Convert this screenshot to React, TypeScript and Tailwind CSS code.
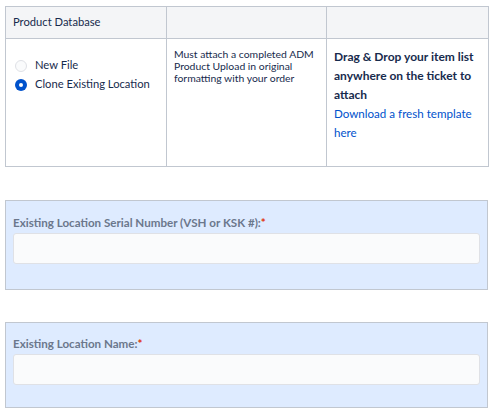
import React from 'react';

const font = { fontFamily: 'Lato, "Liberation Sans", Arial, sans-serif' };

function Radio({ checked, label }: { checked: boolean; label: string }) {
  return (
    <label className="flex items-center h-[19px] text-[11.2px] text-[#172b4d] whitespace-nowrap">
      {checked ? (
        <span className="shrink-0 w-[12px] h-[12px] rounded-full bg-[#0052cc] flex items-center justify-center">
          <span className="w-[4px] h-[4px] rounded-full bg-white" />
        </span>
      ) : (
        <span className="shrink-0 w-[12px] h-[12px] rounded-full border border-[#dfe1e6] bg-[#fafbfc]" />
      )}
      <span className="ml-[8px]">{label}</span>
    </label>
  );
}

function FieldBox({ label, className }: { label: string; className: string }) {
  return (
    <div className={`bg-[#deebff] border border-[#c1c7d0] px-[7px] ${className}`}>
      <div className="text-[11.6px] leading-[16px] font-bold text-[#6b778c]">
        {label}
        <span className="text-[#de350b]">*</span>
      </div>
      <div className="mt-[2px] h-[31px] bg-[#fafbfc] border border-[#dfe1e6] rounded-[3px]" />
    </div>
  );
}

export default function App() {
  return (
    <div className="bg-white min-h-[418px] pl-[5px] pt-[6px] w-[488px]" style={font}>
      {/* product database table */}
      <table className="w-[483px] border-collapse table-fixed">
        <colgroup>
          <col className="w-[161px]" />
          <col className="w-[160px]" />
          <col className="w-[162px]" />
        </colgroup>
        <thead>
          <tr className="h-[32px] bg-[#f4f5f7]">
            <th className="border border-[#c1c7d0] px-[7px] text-left font-normal text-[11.2px] text-[#172b4d]">
              Product Database
            </th>
            <th className="border border-[#c1c7d0]" />
            <th className="border border-[#c1c7d0]" />
          </tr>
        </thead>
        <tbody>
          <tr className="h-[128px] align-top">
            <td className="border border-[#c1c7d0] px-[9px] pt-[17px]">
              <Radio checked={false} label="New File" />
              <Radio checked label="Clone Existing Location" />
            </td>
            <td className="border border-[#c1c7d0] px-[7px] pt-[9px] text-[10.4px] leading-[12px] text-[#172b4d]">
              Must attach a completed ADM Product Upload in original formatting with your order
            </td>
            <td className="border border-[#c1c7d0] px-[7px] pt-[8px] text-[12px] leading-[19px]">
              <div className="font-bold text-[#172b4d]">
                Drag &amp; Drop your item list anywhere on the ticket to attach
              </div>
              <a className="text-[11.6px] text-[#0052cc]">Download a fresh template here</a>
            </td>
          </tr>
        </tbody>
      </table>

      <div className="w-[483px]">
        <FieldBox
          label="Existing Location Serial Number (VSH or KSK #):"
          className="mt-[33px] pt-[14px] pb-[25px]"
        />
        <FieldBox label="Existing Location Name:" className="mt-[32px] pt-[13px] pb-[22px]" />
      </div>
    </div>
  );
}
